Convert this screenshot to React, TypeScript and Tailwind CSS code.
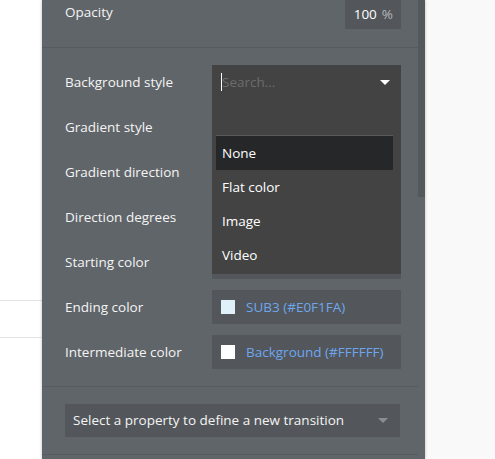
const rows = [
  "Background style",
  "Gradient style",
  "Gradient direction",
  "Direction degrees",
  "Starting color",
];

const options = ["None", "Flat color", "Image", "Video"];

function ColorField({ swatch, text }: { swatch: string; text: string }) {
  return (
    <div className="flex h-[34px] w-[189px] items-center gap-[11px] bg-[#53575b] pl-[9px]">
      <span className="h-[14px] w-[14px]" style={{ backgroundColor: swatch }} />
      <span className="text-[13.5px] text-[#6ea6ee]">{text}</span>
    </div>
  );
}

function Caret({ className }: { className: string }) {
  return (
    <svg width="10" height="5" viewBox="0 0 10 5" className={className}>
      <path d="M0 0h10L5 5z" fill="currentColor" />
    </svg>
  );
}

export default function App() {
  return (
    <div
      className="flex h-[459px] w-[495px] overflow-hidden bg-[#f9f9f9]"
      style={{ fontFamily: '"Open Sans", "Noto Sans", sans-serif' }}
    >
      {/* canvas strip on the left */}
      <div className="flex w-[42px] shrink-0 flex-col bg-white">
        <div className="h-[300px]" />
        <div className="h-px bg-[#e4e4e4]" />
        <div className="h-[36px]" />
        <div className="h-px bg-[#e4e4e4]" />
      </div>

      {/* property editor */}
      <div className="relative w-[383px] shrink-0 bg-[#606569] shadow-[0_0_3px_rgba(0,0,0,0.25)]">
        <div className="absolute right-0 top-0 h-[197px] w-[7px] bg-[#53585c]" />

        <div className="mr-[7px] flex flex-col">
          <div className="mt-[-5px] flex h-[34px] items-center justify-between pl-[23px] pr-[17px]">
            <span className="text-[13.5px] text-[#f4f4f4]">Opacity</span>
            <div className="flex h-[34px] w-[56px] items-center justify-end gap-[5px] bg-[#53575b] pr-[8px] pt-[5px] text-[13.5px]">
              <span className="text-white">100</span>
              <span className="text-[#b4b7ba]">%</span>
            </div>
          </div>

          <div className="mt-[18px] h-px bg-[#575b5f]" />

          <div className="mt-[17px] flex flex-col gap-[11px] pl-[23px] pr-[17px]">
            {rows.map((label) => (
              <div key={label} className="flex h-[34px] items-center justify-between">
                <span className="text-[13.5px] text-[#f4f4f4]">{label}</span>
                <div className="h-[34px] w-[189px] bg-[#53575b]" />
              </div>
            ))}
            <div className="flex h-[34px] items-center justify-between">
              <span className="text-[13.5px] text-[#f4f4f4]">Ending color</span>
              <ColorField swatch="#E0F1FA" text="SUB3 (#E0F1FA)" />
            </div>
            <div className="flex h-[34px] items-center justify-between">
              <span className="text-[13.5px] text-[#f4f4f4]">Intermediate color</span>
              <ColorField swatch="#FFFFFF" text="Background (#FFFFFF)" />
            </div>
          </div>

          <div className="mt-[17px] h-px bg-[#575b5f]" />

          <div className="ml-[23px] mr-[18px] mt-[17px] flex h-[33px] items-center justify-between bg-[#53575b] pl-[8px] pr-[12px]">
            <span className="text-[13.5px] text-[#f4f4f4]">
              Select a property to define a new transition
            </span>
            <Caret className="text-[#8b8e91]" />
          </div>

          <div className="mt-[17px] h-px bg-[#575b5f]" />
        </div>

        {/* open dropdown */}
        <div className="absolute left-[170px] top-[65px] flex h-[209px] w-[189px] flex-col bg-[#434343] pl-[4px] pr-[8px]">
          <div className="flex h-[34px] items-center justify-between pl-[5px] pr-[3px]">
            <div className="flex items-center">
              <span className="h-[18px] w-px bg-white" />
              <span className="text-[13.5px] text-[#6c6c6c]">Search...</span>
            </div>
            <Caret className="text-white" />
          </div>
          <div className="mt-[36px] border-t border-[#5a5a5a]">
            {options.map((opt, i) => (
              <div
                key={opt}
                className={
                  i === 0
                    ? "flex h-[34px] items-center bg-[#262729] pl-[6px] text-[13.5px] text-white"
                    : "flex h-[34px] items-center pl-[6px] text-[13.5px] text-white"
                }
              >
                {opt}
              </div>
            ))}
          </div>
        </div>
      </div>

      <div className="flex-1" />
    </div>
  );
}
